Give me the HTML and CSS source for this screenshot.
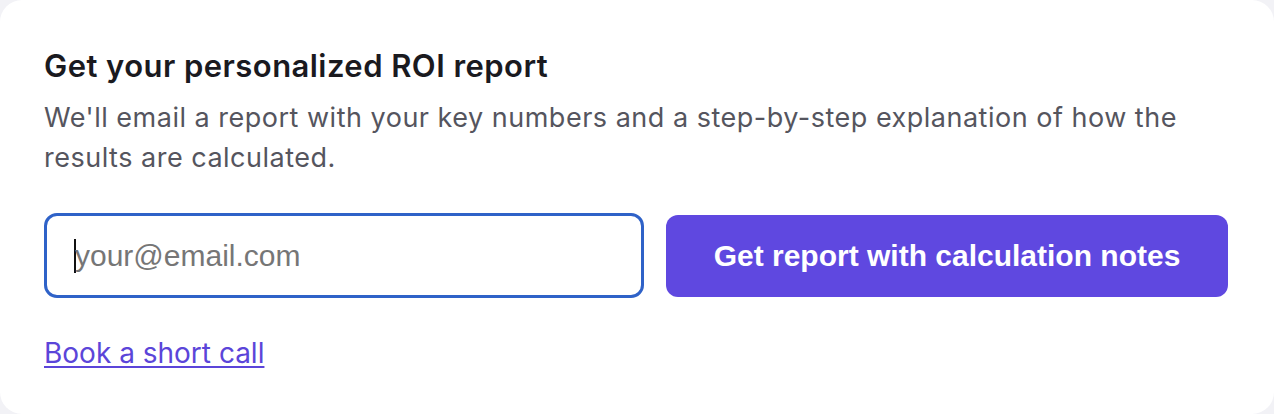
FILE: index.html
```html
<!DOCTYPE html>
<html lang="en">
<head>
<meta charset="utf-8">
<title>ROI report</title>
<link rel="stylesheet" href="styles.css">
</head>
<body>
<div class="card">
  <h2 class="title">Get your personalized ROI report</h2>
  <p class="desc">We'll email a report with your key numbers and a step-by-step explanation of how the results are calculated.</p>
  <form class="form">
    <div class="field"><span class="caret"></span><span class="placeholder">your@email.com</span></div>
    <button type="button" class="btn">Get report with calculation notes</button>
  </form>
  <a class="link" href="#">Book a short call</a>
</div>
</body>
</html>
```
FILE: styles.css
```css
html, body {
  margin: 0;
  padding: 0;
  background: #f2f2f6;
}
.card {
  box-sizing: border-box;
  width: 1274px;
  height: 414px;
  background: #ffffff;
  border-radius: 22px;
  padding: 46px 46px 0 44px;
  font-family: Inter, "Noto Sans", sans-serif;
}
.title {
  margin: 0;
  font-size: 31px;
  font-weight: 600;
  line-height: 40px;
  color: #1a1a1f;
  letter-spacing: 0.45px;
}
.desc {
  margin: 12px 0 0;
  font-size: 27px;
  line-height: 40px;
  color: #55555e;
  letter-spacing: 0.5px;
}
.form {
  display: flex;
  gap: 22px;
  margin-top: 35px;
  align-items: center;
}
.field {
  box-sizing: border-box;
  width: 600px;
  height: 85px;
  border: 3px solid #2f62c8;
  border-radius: 13px;
  display: flex;
  align-items: center;
  padding-left: 27px;
  font-family: "Liberation Sans", Arial, sans-serif;
  font-size: 30px;
  color: #767676;
}
.caret {
  width: 2px;
  height: 34px;
  background: #111;
  margin-right: -1px;
}
.btn {
  flex: 1;
  height: 82px;
  border: 0;
  border-radius: 12px;
  background: #5f48e0;
  color: #fff;
  font-family: "Liberation Sans", Arial, sans-serif;
  font-weight: 700;
  font-size: 30px;
}
.link {
  display: inline-block;
  margin-top: 37px;
  font-size: 28px;
  line-height: 36px;
  color: #5b45d9;
  text-decoration: underline;
  text-underline-offset: 3px;
  text-decoration-thickness: 1.5px;
}
```
